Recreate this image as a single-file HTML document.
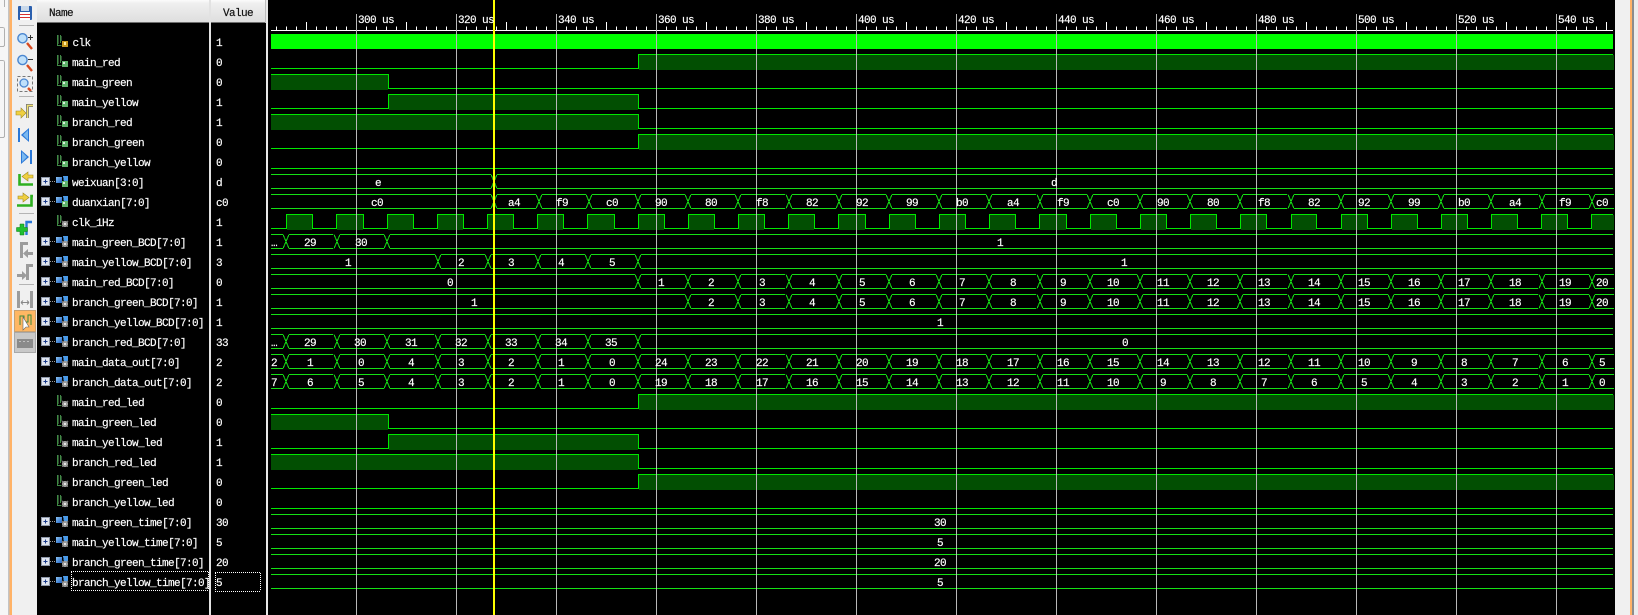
<!DOCTYPE html>
<html><head><meta charset="utf-8"><title>Waveform</title>
<style>
html,body{margin:0;padding:0;background:#000;width:1638px;height:615px;overflow:hidden}
svg{display:block}
text{font-family:"Liberation Mono",monospace;font-size:11px;letter-spacing:-.6px;fill:#fff;stroke:#fff;stroke-width:.18px}
.w text{text-anchor:middle}
.h text{fill:#111;stroke:#111}
.c{shape-rendering:crispEdges}
</style></head><body>
<svg width="1638" height="615" viewBox="0 0 1638 615" xmlns="http://www.w3.org/2000/svg">
<defs>
<linearGradient id="hd" x1="0" y1="0" x2="0" y2="1"><stop offset="0" stop-color="#fbfbfb"/><stop offset=".15" stop-color="#efefef"/><stop offset="1" stop-color="#dedede"/></linearGradient>
<linearGradient id="bl" x1="0" y1="0" x2="1" y2="1"><stop offset="0" stop-color="#8cc4f4"/><stop offset="1" stop-color="#1c5fc0"/></linearGradient>
<clipPath id="wc"><rect x="271" y="30" width="1343" height="585"/></clipPath>
<path id="X" d="M-3 0L3 14M-3 14L3 0"/>
<g id="p"><use href="#X"/><path d="M3 0H47M3 14H47"/></g>
<g id="R1"><use href="#p" x="688"/><use href="#p" x="738"/><use href="#p" x="789"/><use href="#p" x="839"/><use href="#p" x="889"/><use href="#p" x="939"/><use href="#p" x="989"/><use href="#p" x="1040"/><use href="#p" x="1090"/><use href="#p" x="1140"/><use href="#p" x="1190"/><use href="#p" x="1240"/><use href="#p" x="1291"/><use href="#p" x="1341"/><use href="#p" x="1391"/><use href="#p" x="1441"/><use href="#p" x="1491"/><use href="#p" x="1542"/><use href="#p" x="1592"/></g>
<g id="R"><use href="#p" x="638"/><use href="#R1"/></g>
<g id="Lf"><use href="#p" x="286"/><use href="#p" x="337"/><use href="#p" x="387"/><use href="#p" x="438"/><use href="#p" x="488"/><use href="#p" x="538"/><use href="#p" x="588"/></g>
<g id="bits">
<path fill="#024f02" d="M639 55h975v15H639zM271 75h117v15H271zM389 95h249v15H389zM271 115h367v15H271zM639 135h975v15H639z"/>
<path fill="none" stroke="#00e800" d="M271 68.5H638.5V54.5H1613M271 74.5H388.5V88.5H1613M271 108.5H388.5V94.5H638.5V108.5H1613M271 114.5H638.5V128.5H1613M271 148.5H638.5V134.5H1613"/>
</g>
<g id="sig"><path d="M57.5 35V45.5H61.5M60.5 35V43" fill="none" stroke="#3f8a44"/><path d="M58.5 35V44M61.5 36V41" fill="none" stroke="#2c4a2e"/></g>
<g id="sq"><rect x="62" y="41" width="6" height="6" fill="#5fb36b"/><rect x="63" y="42" width="2" height="2" fill="#d8f0dc"/></g>
<g id="gr"><circle cx="65" cy="44" r="3.2" fill="#9a9a9a"/><circle cx="65" cy="44" r="1.2" fill="#e4e4e4"/><path d="M62 41l1 1M68 41l-1 1M62 47l1-1M68 47l-1-1" stroke="#777"/></g>
<g id="sigG"><use href="#sig"/><use href="#sq"/></g>
<g id="sigC"><use href="#sig"/><use href="#gr"/></g>
<g id="bx"><rect x="41.5" y="37.5" width="8" height="8" fill="#dfe4ee" stroke="#8c96a8"/><path d="M43.5 41.5h4M45.5 39.5v4" stroke="#1a3a8a"/><path d="M50 41.5h6" stroke="#9a9a9a" stroke-dasharray="1 1"/><path d="M56 37h6v6h-6z" fill="url(#bl)"/><path d="M63 36l5 0v6l-4 0z" fill="#4a9ae8"/></g>
<g id="busG"><use href="#bx"/><use href="#sq"/></g>
<g id="busC"><use href="#bx"/><use href="#gr"/></g>
</defs>

<!-- left chrome -->
<rect width="1638" height="615" fill="#000"/>
<rect x="0" y="0" width="9" height="615" fill="#f6f6f6"/>
<g class="c" fill="none" stroke="#b0b0b0"><path d="M-2 27.5H2.5Q4.5 27.5 4.5 29.5V44.5Q4.5 46.5 2.5 46.5H-2M-2 60.5H2.5Q4.5 60.5 4.5 62.5V135.5Q4.5 137.5 2.5 137.5H-2M4.5 0V7"/></g>
<rect x="8" y="0" width="1.5" height="615" fill="#c4c4c4"/>
<rect x="9.5" y="0" width="2.5" height="615" fill="#ffb266"/>
<rect x="12" y="0" width="25" height="615" fill="#f0f0f0"/>

<!-- toolbar icons -->
<rect x="18" y="6" width="14" height="14" rx="1" fill="#2a5fae"/><rect x="21" y="6" width="8" height="5" fill="#c8d8ea"/><rect x="20" y="12" width="10" height="8" fill="#fff"/><path class="c" d="M20 14.5h10M20 17.5h10" stroke="#d83030"/>
<path d="M19 25.5h15M19 96.5h15M19 213.5h15M19 284.5h15" stroke="#b4b4b4" class="c"/>
<g fill="none">
<path d="M27 43l5 6M27 65l5 6M28 88l3 3" stroke="#d84a20" stroke-width="2.4"/>
<circle cx="22.5" cy="38.3" r="4.6" fill="#bfe0fa" stroke="#4a86d0" stroke-width="1.4"/>
<circle cx="22.5" cy="60" r="4.6" fill="#bfe0fa" stroke="#4a86d0" stroke-width="1.4"/>
<circle cx="24" cy="83" r="4" fill="#bfe0fa" stroke="#4a86d0" stroke-width="1.3"/>
<path class="c" d="M28 37.5h5M30.5 35v5M28 59.5h5" stroke="#333"/>
<rect class="c" x="17.5" y="76.5" width="15" height="15" stroke="#777" stroke-dasharray="3 2"/>
</g>
<!-- step icons -->
<path d="M27.5 118V105.5H33" fill="none" stroke="#777" stroke-width="3"/><path d="M27.5 118V105.5H33" fill="none" stroke="#f0e070" stroke-width="1.4"/>
<path d="M16 111h5v-3l5 5-5 5v-3h-5z" fill="#f0d040" stroke="#a08a20" stroke-width=".6"/>
<path d="M18 128h2v14h-2zM29 128l-8 7 8 7z" fill="#2a78d8"/><path d="M28 130l-5 5 5 5z" fill="#7ab8f0"/>
<path d="M30 150h2v14h-2zM21 150l8 7-8 7z" fill="#2a78d8"/><path d="M22 152l5 5-5 5z" fill="#7ab8f0"/>
<path d="M19.5 174V184.5H33" fill="none" stroke="#2fb020" stroke-width="2.6"/>
<path d="M33 175h-5v-3l-6 4.500 6 4.500v-3h5z" fill="#f0d040" stroke="#a08a20" stroke-width=".6"/>
<path d="M17 205.500H31.500V196H33" fill="none" stroke="#2fb020" stroke-width="2.6"/>
<path d="M18 196h5v-3l6 4.500-6 4.500v-3h-5z" fill="#f0d040" stroke="#a08a20" stroke-width=".6"/>
<path d="M26.500 235V222H32" fill="none" stroke="#2a78d8" stroke-width="2.400"/>
<path d="M20 224h4v3.500h3.500v4H24V235h-4v-3.500h-3.500v-4H20z" fill="#20c030" stroke="#0a7a14" stroke-width=".5"/>
<g fill="#9c9c9c"><path d="M20 242h8v3h-5v13h-3zM33 252h-5v-3l-5 4.500 5 4.500v-3h5z"/><path d="M26 264h7v3h-4v13h-3zM17 274h5v-3l5 4.500-5 4.500v-3h-5z"/>
<path d="M17 291h3v17h-3zM30 291h3v17h-3z"/></g>
<path d="M21 302.500h8M21 302.500l2-2M21 302.500l2 2M29 302.500l-2-2M29 302.500l-2 2" stroke="#888" fill="none"/>
<rect class="c" x="14.500" y="310.500" width="21" height="21" fill="#ffb763" stroke="#c8a070"/>
<path d="M20 325v-9h4v9M24 322h4v-7h3v10" fill="none" stroke="#3a8a3a"/><path d="M23 317v13l3-3 3 0z" fill="#fff" stroke="#666" stroke-width=".6"/>
<rect class="c" x="14.500" y="332.500" width="21" height="20" fill="#c8c8c8" stroke="#a8a8a8"/>
<rect class="c" x="17" y="339" width="16" height="9" fill="#8a8a8a"/><path class="c" d="M19 341.500h12" stroke="#c0c0c0" stroke-dasharray="2 2"/>

<!-- headers and separators -->
<rect class="c" x="37" y="0" width="172" height="22.500" fill="url(#hd)"/>
<rect class="c" x="211" y="0" width="54" height="22.500" fill="url(#hd)"/>
<rect class="c" x="209" y="0" width="2" height="615" fill="#e2e2e2"/>
<rect class="c" x="265" y="0" width="1" height="23" fill="#bdbdbd"/>
<rect class="c" x="266" y="0" width="2" height="615" fill="#e8e8e8"/>
<g class="h"><text x="49" y="16">Name</text><text x="223" y="16">Value</text></g>

<!-- name icons -->
<g class="c">
<use href="#sig"/><rect x="62" y="41" width="6" height="6" fill="#c89a20"/><rect x="64" y="42" width="2" height="3" fill="#fff0a0"/>
<use href="#sigG" y="20"/><use href="#sigG" y="40"/><use href="#sigG" y="60"/><use href="#sigG" y="80"/><use href="#sigG" y="100"/><use href="#sigG" y="120"/>
<use href="#busG" y="140"/><use href="#busG" y="160"/>
<use href="#sigC" y="180"/>
<use href="#busC" y="200"/><use href="#busC" y="220"/><use href="#busC" y="240"/><use href="#busC" y="260"/><use href="#busC" y="280"/><use href="#busC" y="300"/><use href="#busC" y="320"/><use href="#busC" y="340"/>
<use href="#sigC" y="360"/><use href="#sigC" y="380"/><use href="#sigC" y="400"/><use href="#sigC" y="420"/><use href="#sigC" y="440"/><use href="#sigC" y="460"/>
<use href="#busC" y="480"/><use href="#busC" y="500"/><use href="#busC" y="520"/><use href="#busC" y="540"/>
</g>

<!-- name labels -->
<g>
<text x="72.500" y="46">clk</text>
<text x="72" y="66">main_red</text>
<text x="72" y="86">main_green</text>
<text x="72" y="106">main_yellow</text>
<text x="72" y="126">branch_red</text>
<text x="72" y="146">branch_green</text>
<text x="72" y="166">branch_yellow</text>
<text x="72" y="186">weixuan[3:0]</text>
<text x="72" y="206">duanxian[7:0]</text>
<text x="72" y="226">clk_1Hz</text>
<text x="72" y="246">main_green_BCD[7:0]</text>
<text x="72" y="266">main_yellow_BCD[7:0]</text>
<text x="72" y="286">main_red_BCD[7:0]</text>
<text x="72" y="306">branch_green_BCD[7:0]</text>
<text x="72" y="326">branch_yellow_BCD[7:0]</text>
<text x="72" y="346">branch_red_BCD[7:0]</text>
<text x="72" y="366">main_data_out[7:0]</text>
<text x="72" y="386">branch_data_out[7:0]</text>
<text x="72" y="406">main_red_led</text>
<text x="72" y="426">main_green_led</text>
<text x="72" y="446">main_yellow_led</text>
<text x="72" y="466">branch_red_led</text>
<text x="72" y="486">branch_green_led</text>
<text x="72" y="506">branch_yellow_led</text>
<text x="72" y="526">main_green_time[7:0]</text>
<text x="72" y="546">main_yellow_time[7:0]</text>
<text x="72" y="566">branch_green_time[7:0]</text>
<text x="72" y="586">branch_yellow_time[7:0]</text>
</g>
<!-- values -->
<g>
<text x="216" y="46">1</text><text x="216" y="66">0</text><text x="216" y="86">0</text><text x="216" y="106">1</text><text x="216" y="126">1</text><text x="216" y="146">0</text><text x="216" y="166">0</text><text x="216" y="186">d</text><text x="216" y="206">c0</text><text x="216" y="226">1</text><text x="216" y="246">1</text><text x="216" y="266">3</text><text x="216" y="286">0</text><text x="216" y="306">1</text><text x="216" y="326">1</text><text x="216" y="346">33</text><text x="216" y="366">2</text><text x="216" y="386">2</text><text x="216" y="406">0</text><text x="216" y="426">0</text><text x="216" y="446">1</text><text x="216" y="466">1</text><text x="216" y="486">0</text><text x="216" y="506">0</text><text x="216" y="526">30</text><text x="216" y="546">5</text><text x="216" y="566">20</text><text x="216" y="586">5</text>
</g>
<path fill="none" stroke="#fff" stroke-dasharray="1 1" d="M71 571.500H209M71 590.500H209M71.500 572V590M208.500 572V590M215 572.500H261M215 591.500H261M215.500 573V591M260.500 573V591"/>

<!-- ruler -->
<g class="c" fill="none" stroke="#fff">
<path d="M271 30.500H1613"/>
<path d="M276 28.500H1610" stroke-width="4" stroke-dasharray="1 9"/>
<path d="M306 26H1610" stroke-width="8" stroke-dasharray="1 99"/>
</g>

<!-- waves -->
<g class="c">
<rect x="271" y="34" width="1342" height="15" fill="#00ff00"/>
<use href="#bits"/>
<use href="#bits" y="340"/>
<path fill="none" stroke="#00e800" d="M271 168.500H1613M271 508.500H1613"/>
<path fill="#024f02" d="M287 215h25v15h-25zM337 215h26v15h-26zM388 215h25v15h-25zM438 215h25v15h-25zM488 215h25v15h-25zM538 215h25v15h-25zM588 215h26v15h-26zM639 215h25v15h-25zM689 215h25v15h-25zM739 215h25v15h-25zM789 215h25v15h-25zM839 215h26v15h-26zM890 215h25v15h-25zM940 215h25v15h-25zM990 215h25v15h-25zM1040 215h26v15h-26zM1091 215h25v15h-25zM1141 215h25v15h-25zM1191 215h25v15h-25zM1241 215h25v15h-25zM1292 215h24v15h-24zM1342 215h25v15h-25zM1392 215h25v15h-25zM1442 215h25v15h-25zM1492 215h25v15h-25zM1542 215h25v15h-25zM1592 215h22v15h-22z"/>
<path fill="none" stroke="#00e800" d="M271 228.500H286.500V214.500H312.500V228.500H336.500V214.500H363.500V228.500H387.500V214.500H413.500V228.500H437.500V214.500H463.500V228.500H487.500V214.500H513.500V228.500H537.500V214.500H563.500V228.500H587.500V214.500H614.500V228.500H638.500V214.500H664.500V228.500H688.500V214.500H714.500V228.500H738.500V214.500H764.500V228.500H788.500V214.500H814.500V228.500H838.500V214.500H865.500V228.500H889.500V214.500H915.500V228.500H939.500V214.500H965.500V228.500H989.500V214.500H1015.500V228.500H1039.500V214.500H1066.500V228.500H1090.500V214.500H1116.500V228.500H1140.500V214.500H1166.500V228.500H1190.500V214.500H1216.500V228.500H1240.500V214.500H1266.500V228.500H1291.500V214.500H1316.500V228.500H1341.500V214.500H1367.500V228.500H1391.500V214.500H1417.500V228.500H1441.500V214.500H1467.500V228.500H1491.500V214.500H1517.500V228.500H1541.500V214.500H1567.500V228.500H1591.500V214.500H1613"/>
<g fill="none" stroke="#14e014" clip-path="url(#wc)">
<!-- weixuan -->
<path d="M271 174.500H491M271 188.500H491M497 174.500H1613M497 188.500H1613"/><use href="#X" x="494" y="174.500"/>
<!-- duanxian -->
<path d="M271 194.500H491M271 208.500H491M497 194.500H536M497 208.500H536"/><use href="#X" x="494" y="194.500"/><use href="#p" x="539" y="194.500"/><use href="#p" x="589" y="194.500"/><use href="#R" y="194.500"/>
<!-- main_green_BCD -->
<path d="M271 234.500H283M271 248.500H283M390 234.500H1613M390 248.500H1613"/><use href="#p" x="286" y="234.500"/><use href="#p" x="337" y="234.500"/><use href="#X" x="387" y="234.500"/>
<!-- main_yellow_BCD -->
<path d="M271 254.500H435M271 268.500H435M641 254.500H1613M641 268.500H1613"/><use href="#p" x="438" y="254.500"/><use href="#p" x="488" y="254.500"/><use href="#p" x="538" y="254.500"/><use href="#p" x="588" y="254.500"/><use href="#X" x="638" y="254.500"/>
<!-- main_red_BCD -->
<path d="M271 274.500H635M271 288.500H635"/><use href="#R" y="274.500"/>
<!-- branch_green_BCD -->
<path d="M271 294.500H685M271 308.500H685"/><use href="#R1" y="294.500"/>
<!-- branch_yellow_BCD -->
<path d="M271 314.500H1613M271 328.500H1613"/>
<!-- branch_red_BCD -->
<path d="M271 334.500H283M271 348.500H283M641 334.500H1613M641 348.500H1613"/><use href="#Lf" y="334.500"/><use href="#X" x="638" y="334.500"/>
<!-- data out -->
<path d="M271 354.500H283M271 368.500H283"/><use href="#Lf" y="354.500"/><use href="#R" y="354.500"/>
<path d="M271 374.500H283M271 388.500H283"/><use href="#Lf" y="374.500"/><use href="#R" y="374.500"/>
<!-- time rows -->
<path d="M271 514.500H1613M271 528.500H1613M271 534.500H1613M271 548.500H1613M271 554.500H1613M271 568.500H1613M271 574.500H1613M271 588.500H1613"/>
</g>
<!-- grid & cursor -->
<path fill="none" stroke="#b8b8b8" d="M356.500 14V615M456.500 14V615M556.500 14V615M656.500 14V615M756.500 14V615M856.500 14V615M956.500 14V615M1056.500 14V615M1156.500 14V615M1256.500 14V615M1356.500 14V615M1456.500 14V615M1556.500 14V615"/>
<rect x="493" y="0" width="2" height="615" fill="#ffff00"/>
</g>

<!-- ruler labels -->
<g>
<text x="358" y="23">300 us</text><text x="458" y="23">320 us</text><text x="558" y="23">340 us</text><text x="658" y="23">360 us</text><text x="758" y="23">380 us</text><text x="858" y="23">400 us</text><text x="958" y="23">420 us</text><text x="1058" y="23">440 us</text><text x="1158" y="23">460 us</text><text x="1258" y="23">480 us</text><text x="1358" y="23">500 us</text><text x="1458" y="23">520 us</text><text x="1558" y="23">540 us</text>
</g>

<!-- wave labels -->
<g class="w">
<g transform="translate(0,186)"><text x="378">e</text><text x="1054">d</text></g>
<g transform="translate(0,206)"><text x="377">c0</text><text x="514">a4</text><text x="562">f9</text><text x="612">c0</text><text x="661">90</text><text x="711">80</text><text x="762">f8</text><text x="812">82</text><text x="862">92</text><text x="912">99</text><text x="962">b0</text><text x="1013">a4</text><text x="1063">f9</text><text x="1113">c0</text><text x="1163">90</text><text x="1213">80</text><text x="1264">f8</text><text x="1314">82</text><text x="1364">92</text><text x="1414">99</text><text x="1464">b0</text><text x="1515">a4</text><text x="1565">f9</text><text x="1602">c0</text></g>
<g transform="translate(0,246)"><text x="274">…</text><text x="310">29</text><text x="361">30</text><text x="1000">1</text></g>
<g transform="translate(0,266)"><text x="348">1</text><text x="461">2</text><text x="511">3</text><text x="561">4</text><text x="612">5</text><text x="1124">1</text></g>
<g transform="translate(0,286)"><text x="450">0</text><text x="661">1</text><text x="711">2</text><text x="762">3</text><text x="812">4</text><text x="862">5</text><text x="912">6</text><text x="962">7</text><text x="1013">8</text><text x="1063">9</text><text x="1113">10</text><text x="1163">11</text><text x="1213">12</text><text x="1264">13</text><text x="1314">14</text><text x="1364">15</text><text x="1414">16</text><text x="1464">17</text><text x="1515">18</text><text x="1565">19</text><text x="1602">20</text></g>
<g transform="translate(0,306)"><text x="474">1</text><text x="711">2</text><text x="762">3</text><text x="812">4</text><text x="862">5</text><text x="912">6</text><text x="962">7</text><text x="1013">8</text><text x="1063">9</text><text x="1113">10</text><text x="1163">11</text><text x="1213">12</text><text x="1264">13</text><text x="1314">14</text><text x="1364">15</text><text x="1414">16</text><text x="1464">17</text><text x="1515">18</text><text x="1565">19</text><text x="1602">20</text></g>
<g transform="translate(0,326)"><text x="940">1</text></g>
<g transform="translate(0,346)"><text x="274">…</text><text x="310">29</text><text x="360">30</text><text x="411">31</text><text x="461">32</text><text x="511">33</text><text x="561">34</text><text x="611">35</text><text x="1125">0</text></g>
<g transform="translate(0,366)"><text x="274">2</text><text x="310">1</text><text x="361">0</text><text x="411">4</text><text x="461">3</text><text x="511">2</text><text x="561">1</text><text x="612">0</text><text x="661">24</text><text x="711">23</text><text x="762">22</text><text x="812">21</text><text x="862">20</text><text x="912">19</text><text x="962">18</text><text x="1013">17</text><text x="1063">16</text><text x="1113">15</text><text x="1163">14</text><text x="1213">13</text><text x="1264">12</text><text x="1314">11</text><text x="1364">10</text><text x="1414">9</text><text x="1464">8</text><text x="1515">7</text><text x="1565">6</text><text x="1602">5</text></g>
<g transform="translate(0,386)"><text x="274">7</text><text x="310">6</text><text x="361">5</text><text x="411">4</text><text x="461">3</text><text x="511">2</text><text x="561">1</text><text x="612">0</text><text x="661">19</text><text x="711">18</text><text x="762">17</text><text x="812">16</text><text x="862">15</text><text x="912">14</text><text x="962">13</text><text x="1013">12</text><text x="1063">11</text><text x="1113">10</text><text x="1163">9</text><text x="1213">8</text><text x="1264">7</text><text x="1314">6</text><text x="1364">5</text><text x="1414">4</text><text x="1464">3</text><text x="1515">2</text><text x="1565">1</text><text x="1602">0</text></g>
<text x="940" y="526">30</text><text x="940" y="546">5</text><text x="940" y="566">20</text><text x="940" y="586">5</text>
</g>

<!-- right chrome -->
<rect class="c" x="1615" y="0" width="15" height="615" fill="#f0f0f0"/>
<rect class="c" x="1630" y="0" width="2" height="615" fill="#ffb266"/>
<rect class="c" x="1632" y="0" width="2" height="615" fill="#8c8c8c"/>
<rect class="c" x="1634" y="0" width="4" height="615" fill="#ececec"/>
</svg>
</body></html>
